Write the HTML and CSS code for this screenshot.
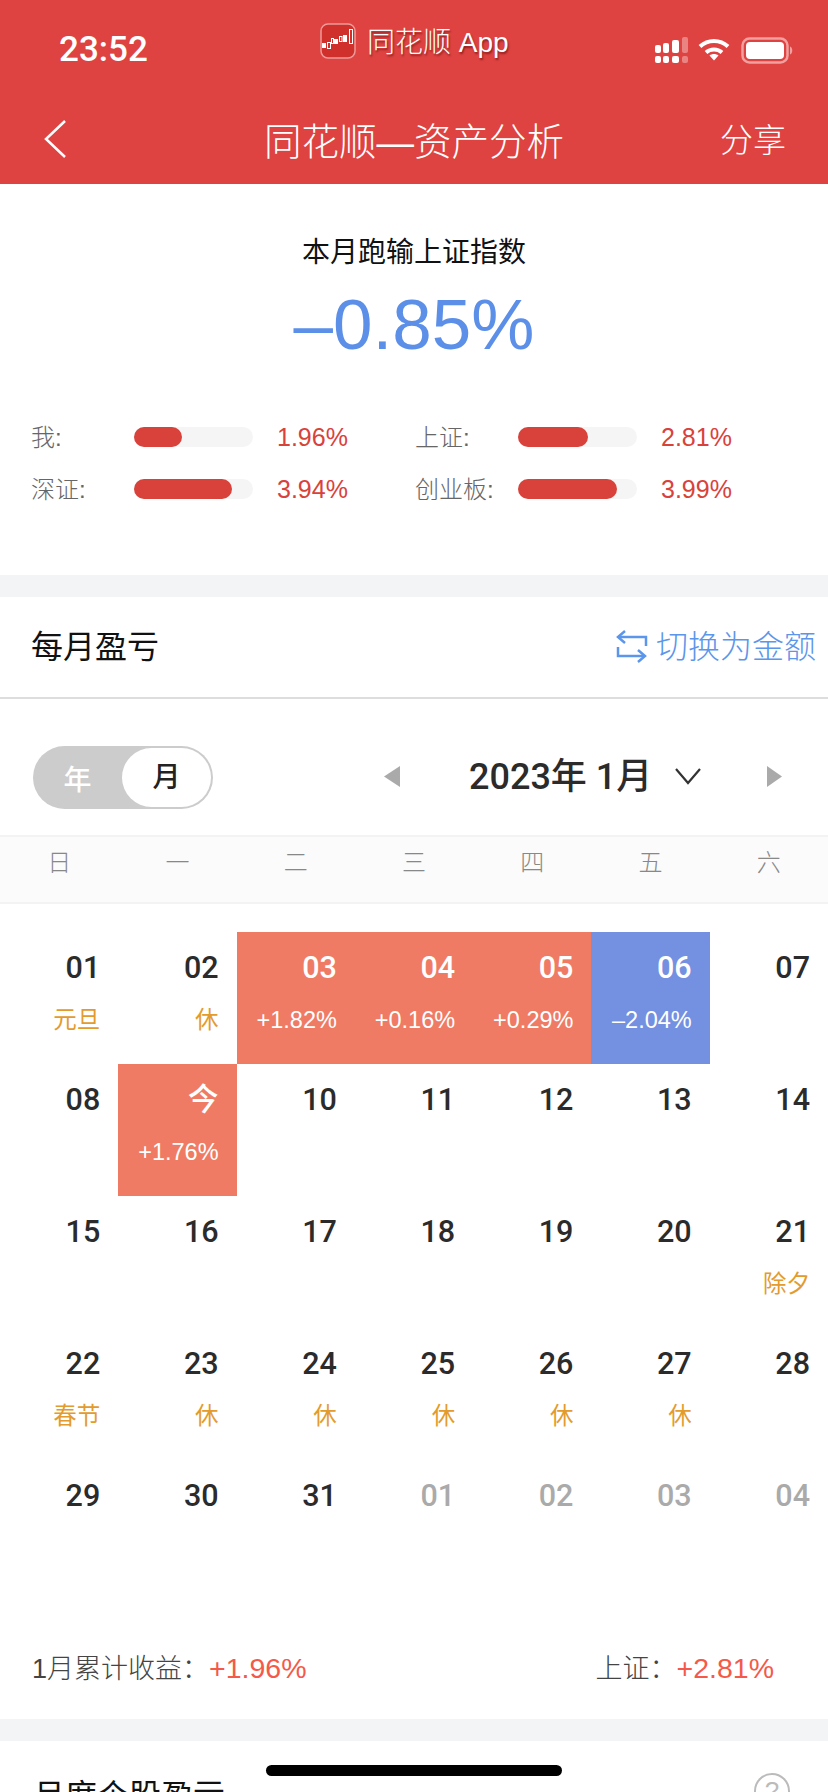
FILE: index.html
```html
<!DOCTYPE html>
<html lang="zh-CN">
<head>
    <meta charset="UTF-8">
    <title>同花顺—资产分析</title>
    <link rel="stylesheet" href="styles.css">
</head>
<body>
<div id="page">
    <div class="header">
        <div class="status">
            <span class="time">23:52</span>
            <div class="app-label">
                <svg class="app-logo" width="36" height="36" viewBox="0 0 36 36">
                    <rect x="1" y="1" width="34" height="34" rx="7" fill="#cf302c" stroke="#ee9a98" stroke-width="1.500"/>
                    <g fill="#fff">
                        <rect x="2" y="20" width="4" height="5"/>
                        <rect x="14" y="16" width="4" height="5"/>
                        <rect x="23" y="12" width="4" height="7"/>
                    </g>
                    <g fill="none" stroke="#fff">
                        <rect x="7.500" y="19.500" width="3" height="6"/>
                        <rect x="11.500" y="15.500" width="2" height="5"/>
                        <rect x="19.500" y="13.500" width="2.500" height="5"/>
                        <rect x="29.500" y="6.500" width="3" height="14"/>
                    </g>
                </svg>
                <span class="app-name">同花顺 App</span>
            </div>
            <div class="status-icons">
                <svg class="signal" width="34" height="27" viewBox="0 0 34 27" fill="#fff">
                    <rect x="0" y="8" width="6" height="8" rx="2"/>
                    <rect x="8" y="6" width="6" height="10" rx="2"/>
                    <rect x="17" y="3" width="7" height="13" rx="2"/>
                    <rect x="27" y="0" width="6" height="16" rx="2" opacity=".35"/>
                    <rect x="0" y="19" width="6" height="7" rx="2"/>
                    <rect x="8" y="19" width="6" height="7" rx="2"/>
                    <rect x="17" y="19" width="7" height="7" rx="2"/>
                    <rect x="27" y="19" width="6" height="7" rx="2" opacity=".35"/>
                </svg>
                <svg width="32" height="25" viewBox="0 0 32 25" fill="none" stroke="#fff" stroke-width="4">
                    <path d="M2 9.500C10 2 22 2 30 9.500"/>
                    <path d="M8 15.500C12.500 11.500 19.500 11.500 24 15.500"/>
                    <path d="M11.500 18.500L16 23.500L20.500 18.500C18 16.500 14 16.500 11.500 18.500Z" fill="#fff" stroke="none"/>
                </svg>
                <svg width="53" height="27" viewBox="0 0 53 27">
                    <rect x="1.500" y="1.500" width="45" height="24" rx="7" fill="none" stroke="#f0a19f" stroke-width="2.500"/>
                    <rect x="5" y="5" width="38" height="17" rx="4" fill="#fff"/>
                    <path d="M49 9.500C52 10.500 52 16.500 49 17.500Z" fill="#f0a19f"/>
                </svg>
            </div>
        </div>
        <div class="nav">
            <svg class="back" width="24" height="40" viewBox="0 0 24 40" fill="none" stroke="#fff" stroke-width="2.500">
                <path d="M22 2L3 20L22 38"/>
            </svg>
            <h1>同花顺—资产分析</h1>
            <span class="share">分享</span>
        </div>
    </div>

    <div class="summary">
        <p class="summary-title">本月跑输上证指数</p>
        <p class="summary-num">–0.85%</p>
        <div class="stats">
            <div class="stat">
                <span class="stat-name">我:</span>
                <div class="bar"><div class="bar-fill" style="width: 48px"></div></div>
                <span class="stat-val">1.96%</span>
            </div>
            <div class="stat">
                <span class="stat-name">上证:</span>
                <div class="bar"><div class="bar-fill" style="width: 70px"></div></div>
                <span class="stat-val">2.81%</span>
            </div>
            <div class="stat">
                <span class="stat-name">深证:</span>
                <div class="bar"><div class="bar-fill" style="width: 98px"></div></div>
                <span class="stat-val">3.94%</span>
            </div>
            <div class="stat">
                <span class="stat-name">创业板:</span>
                <div class="bar"><div class="bar-fill" style="width: 99px"></div></div>
                <span class="stat-val">3.99%</span>
            </div>
        </div>
    </div>

    <div class="section">
        <div class="sec-head">
            <span class="sec-title">每月盈亏</span>
            <span class="switch">
                <svg class="switch-icon" width="33" height="34" viewBox="0 0 33 34" fill="none" stroke="#5b96ea" stroke-width="2.500">
                    <path d="M3 8H31V17"/>
                    <path d="M10 2L3 8L10 14"/>
                    <path d="M3 18V27H30"/>
                    <path d="M23 21L30 27L23 33"/>
                </svg>
                切换为金额
            </span>
        </div>

        <div class="toolbar">
            <div class="toggle">
                <span class="toggle-off">年</span>
                <span class="toggle-on">月</span>
            </div>
            <svg class="arrow-l" width="16" height="21" viewBox="0 0 16 21"><path d="M16 0V21L0 10.500Z" fill="#aaa"/></svg>
            <span class="month">2023年 1月</span>
            <svg class="chevron" width="26" height="17" viewBox="0 0 26 17" fill="none" stroke="#333" stroke-width="2.200"><path d="M1 1L13 15L25 1"/></svg>
            <svg class="arrow-r" width="15" height="21" viewBox="0 0 15 21"><path d="M0 0V21L15 10.500Z" fill="#aaa"/></svg>
        </div>

        <div class="weekdays">
            <span>日</span><span>一</span><span>二</span><span>三</span><span>四</span><span>五</span><span>六</span>
        </div>

        <div class="calendar">
            <div class="day"><b>01</b><i class="hol">元旦</i></div>
            <div class="day"><b>02</b><i class="hol">休</i></div>
            <div class="day up"><b>03</b><i>+1.82%</i></div>
            <div class="day up"><b>04</b><i>+0.16%</i></div>
            <div class="day up"><b>05</b><i>+0.29%</i></div>
            <div class="day down"><b>06</b><i>–2.04%</i></div>
            <div class="day"><b>07</b></div>

            <div class="day"><b>08</b></div>
            <div class="day up"><b>今</b><i>+1.76%</i></div>
            <div class="day"><b>10</b></div>
            <div class="day"><b>11</b></div>
            <div class="day"><b>12</b></div>
            <div class="day"><b>13</b></div>
            <div class="day"><b>14</b></div>

            <div class="day"><b>15</b></div>
            <div class="day"><b>16</b></div>
            <div class="day"><b>17</b></div>
            <div class="day"><b>18</b></div>
            <div class="day"><b>19</b></div>
            <div class="day"><b>20</b></div>
            <div class="day"><b>21</b><i class="hol">除夕</i></div>

            <div class="day"><b>22</b><i class="hol">春节</i></div>
            <div class="day"><b>23</b><i class="hol">休</i></div>
            <div class="day"><b>24</b><i class="hol">休</i></div>
            <div class="day"><b>25</b><i class="hol">休</i></div>
            <div class="day"><b>26</b><i class="hol">休</i></div>
            <div class="day"><b>27</b><i class="hol">休</i></div>
            <div class="day"><b>28</b></div>

            <div class="day"><b>29</b></div>
            <div class="day"><b>30</b></div>
            <div class="day"><b>31</b></div>
            <div class="day other"><b>01</b></div>
            <div class="day other"><b>02</b></div>
            <div class="day other"><b>03</b></div>
            <div class="day other"><b>04</b></div>
        </div>

        <div class="total">
            <span>1月累计收益：<em>+1.96%</em></span>
            <span class="total-sh">上证：<em>+2.81%</em></span>
        </div>
    </div>

    <div class="section">
        <div class="sec-next">
            <span class="sec-title">月度个股盈亏</span>
            <span class="help">?</span>
        </div>
    </div>

    <div class="home-bar"></div>
</div>
</body>
</html>
```

FILE: styles.css
```css
*{
    padding: 0;
    margin: 0;
    box-sizing: border-box;
}
html,body{
    height: 1792px;
    overflow: hidden;
}
body{
    font-family: "Liberation Sans", "Noto Sans CJK SC", sans-serif;
    background-color: #f3f4f6;
}
#page{
    position: relative;
    width: 828px;
    height: 1792px;
    overflow: hidden;
}

/* header */
.header{
    height: 184px;
    background-color: #de4341;
    color: white;
}
.status{
    height: 78px;
    display: flex;
    align-items: center;
    padding: 0 34px 0 59px;
}
.time{
    font-family: Roboto, sans-serif;
    font-size: 35px;
    font-weight: 500;
    margin-top: 20px;
    width: 261px;
}
.app-label{
    display: flex;
    align-items: center;
    gap: 11px;
    font-size: 28px;
    font-weight: 300;
    text-shadow: 1px 2px 2px rgba(90,10,10,0.6);
    margin-top: 4px;
}
.app-name{
    margin-bottom: 3px;
}
.status-icons{
    display: flex;
    gap: 11px;
    align-items: flex-start;
    margin-left: auto;
    margin-top: 22px;
}
.signal{
    margin-right: -2px;
}
.nav{
    height: 106px;
    display: flex;
    align-items: center;
    padding: 14px 42px 0 43px;
}
.back{
    margin-top: 2px;
}
.nav h1{
    font-size: 37.500px;
    font-weight: 300;
    width: 300px;
    margin-left: 197px;
    white-space: nowrap;
}
.share{
    font-size: 33px;
    font-weight: 300;
    margin-left: auto;
}

/* summary */
.summary{
    height: 391px;
    background-color: white;
    padding-top: 49px;
    text-align: center;
}
.summary-title{
    font-size: 28px;
    line-height: 40px;
    color: #111;
}
.summary-num{
    font-size: 71px;
    line-height: 80px;
    margin-top: 12px;
    color: #5b8fe8;
}
.stats{
    display: grid;
    grid-template-columns: 384px 1fr;
    row-gap: 20px;
    margin-top: 56px;
    padding-left: 31px;
    text-align: left;
}
.stat{
    display: flex;
    align-items: center;
    height: 32px;
    font-size: 24px;
}
.stat-name{
    width: 103px;
    margin-top: -4px;
    color: #666;
    font-weight: 300;
}
.bar{
    width: 119px;
    height: 20px;
    border-radius: 10px;
    background-color: #f5f5f5;
}
.bar-fill{
    height: 20px;
    border-radius: 10px;
    background-color: #d8423b;
}
.stat-val{
    margin-left: 24px;
    font-size: 25px;
    color: #d8423b;
}

/* section */
.section{
    background-color: white;
    margin-top: 22px;
}
.sec-head{
    height: 102px;
    display: flex;
    align-items: center;
    justify-content: space-between;
    padding: 0 12px 6px 31px;
    border-bottom: 2px solid #ddd;
}
.sec-title{
    font-size: 32px;
    color: #111;
}
.switch{
    display: flex;
    align-items: center;
    gap: 8px;
    font-size: 32px;
    font-weight: 300;
    color: #5b96ea;
}
.switch-icon{
    margin-top: 3px;
}

/* year month bar */
.toolbar{
    height: 136px;
    display: flex;
    align-items: flex-start;
    padding: 47px 0 0 33px;
}
.toggle{
    width: 180px;
    height: 63px;
    border-radius: 32px;
    background-color: #ccc;
    display: flex;
    align-items: center;
    justify-content: space-between;
    padding: 2px;
    font-size: 28px;
    font-weight: 500;
}
.toggle-off{
    color: white;
    width: 85px;
    text-align: center;
}
.toggle-on{
    width: 89px;
    height: 59px;
    line-height: 59px;
    border-radius: 30px;
    background-color: white;
    color: #222;
    text-align: center;
}
.arrow-l{
    margin: 20px 0 0 171px;
}
.month{
    font-family: Roboto, "Noto Sans CJK SC", sans-serif;
    font-size: 36px;
    font-weight: 500;
    line-height: 63px;
    color: #2b2b2b;
    margin-left: 69px;
    white-space: nowrap;
}
.chevron{
    margin: 22px 0 0 23px;
}
.arrow-r{
    margin: 20px 0 0 66px;
}

/* calendar */
.weekdays{
    height: 69px;
    display: grid;
    grid-template-columns: repeat(7, 1fr);
    background-color: #fbfbfb;
    border-top: 2px solid #f3f3f3;
    border-bottom: 2px solid #f3f3f3;
    padding-top: 8px;
    text-align: center;
    font-size: 24px;
    font-weight: 300;
    line-height: 36px;
    color: #888;
}
.calendar{
    display: grid;
    grid-template-columns: repeat(7, 1fr);
    grid-auto-rows: 132px;
    padding-top: 28px;
}
.day{
    display: flex;
    flex-direction: column;
    align-items: flex-end;
    padding: 18px 18px 0 0;
}
.day b{
    font-family: Roboto, "Noto Sans CJK SC", sans-serif;
    font-size: 30.500px;
    font-weight: 500;
    line-height: 36px;
    color: #2b2b2b;
}
.day i{
    font-style: normal;
    font-size: 23.500px;
    line-height: 36px;
    margin-top: 16px;
}
.day .hol{
    color: #e39b2e;
}
.up{
    background-color: #ef7b65;
}
.down{
    background-color: #7490e1;
}
.up b,.up i,.down b,.down i{
    color: white;
}
.other b{
    color: #aaa;
}

/* total row */
.total{
    height: 127px;
    display: flex;
    align-items: flex-start;
    padding: 56px 0 0 32px;
    font-size: 27px;
    font-weight: 300;
    line-height: 40px;
    color: #444;
}
.total em{
    font-style: normal;
    font-weight: 400;
    font-size: 28.500px;
    color: #f4594a;
}
.total-sh{
    margin-left: auto;
    margin-right: 54px;
}

/* next section, cut off by the window */
.sec-next{
    height: 100px;
    display: flex;
    justify-content: space-between;
    align-items: flex-start;
    padding: 29px 38px 0 33px;
}
.help{
    width: 36px;
    height: 36px;
    margin-top: 3px;
    border: 2px solid #bbb;
    border-radius: 50%;
    color: #bbb;
    font-size: 26px;
    line-height: 32px;
    text-align: center;
}
.home-bar{
    position: absolute;
    left: 266px;
    top: 1765px;
    width: 296px;
    height: 11px;
    border-radius: 6px;
    background-color: black;
}
```
